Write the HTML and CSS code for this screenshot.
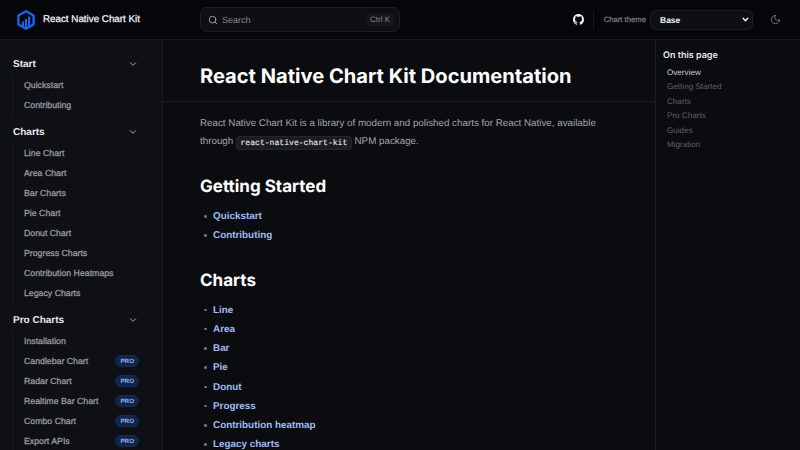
FILE: index.html
```html
<!DOCTYPE html>
<html lang="en">
<head>
    <meta charset="UTF-8">
    <meta name="viewport" content="width=device-width, initial-scale=1.0">
    <title>React Native Chart Kit Documentation</title>
    <link rel="stylesheet" href="styles.css">
</head>
<body>
    <header class="topbar">
        <div class="brand">
            <svg class="logo" viewBox="0 0 20 20" width="20" height="20">
                <path d="M10 1.300 17.600 5.500V14.500L10 18.700 2.400 14.500V5.500Z" fill="none" stroke="#1666ee" stroke-width="2.400" stroke-linejoin="round"/>
                <path d="M5.800 11.500h2.200v5.500H5.800zM8.900 9h2.200v9H8.900zM12 6.500h2.200v10.500H12z" fill="#1666ee"/>
            </svg>
            <span class="brand-name">React Native Chart Kit</span>
        </div>
        <div class="search">
            <svg viewBox="0 0 24 24" width="10" height="10" fill="none" stroke="#a5a7ad" stroke-width="2.200" stroke-linecap="round"><circle cx="11" cy="11" r="8"/><path d="m21 21-4.300-4.300"/></svg>
            <span class="search-label">Search</span>
            <span class="search-key">Ctrl K</span>
        </div>
        <div class="actions">
            <svg class="github" viewBox="0 0 16 16" width="11" height="11" fill="#f2f3f5"><path d="M8 0c4.420 0 8 3.580 8 8a8.013 8.013 0 0 1-5.450 7.590c-.4.080-.55-.170-.55-.380 0-.270.010-1.130.010-2.200 0-.750-.250-1.230-.540-1.480 1.780-.2 3.650-.880 3.650-3.950 0-.880-.310-1.590-.820-2.150.080-.2.360-1.020-.080-2.120 0 0-.670-.220-2.200.820-.640-.180-1.320-.270-2-.270-.680 0-1.360.090-2 .270-1.530-1.030-2.200-.820-2.200-.820-.440 1.100-.160 1.920-.080 2.120-.510.560-.820 1.280-.820 2.150 0 3.060 1.860 3.750 3.640 3.950-.230.2-.440.550-.510 1.070-.460.210-1.610.550-2.330-.660-.150-.240-.600-.830-1.230-.820-.670.010-.270.380.010.530.340.190.730.900.820 1.130.160.450.680 1.310 2.690.940 0 .670.010 1.300.010 1.490 0 .210-.150.450-.550.380A7.995 7.995 0 0 1 0 8c0-4.420 3.580-8 8-8Z"/></svg>
            <span class="divider"></span>
            <span class="theme-label">Chart theme</span>
            <div class="theme-select">
                <span>Base</span>
                <svg viewBox="0 0 12 12" width="7" height="7" fill="none" stroke="#f2f3f5" stroke-width="2.400" stroke-linecap="round" stroke-linejoin="round"><path d="m2 4 4 4 4-4"/></svg>
            </div>
            <svg class="moon" viewBox="0 0 24 24" width="11" height="11" fill="none" stroke="#7d7f86" stroke-width="2" stroke-linecap="round" stroke-linejoin="round"><path d="M12 3a6 6 0 0 0 9 9 9 9 0 1 1-9-9Z"/></svg>
        </div>
    </header>

    <div class="layout">
        <nav class="sidebar">
            <div class="group">
                <div class="group-title">Start <svg class="chevron" viewBox="0 0 12 12" width="8" height="8"><path d="m2 4 4 4 4-4"/></svg></div>
                <ul class="group-items">
                    <li>Quickstart</li>
                    <li>Contributing</li>
                </ul>
            </div>
            <div class="group">
                <div class="group-title">Charts <svg class="chevron" viewBox="0 0 12 12" width="8" height="8"><path d="m2 4 4 4 4-4"/></svg></div>
                <ul class="group-items">
                    <li>Line Chart</li>
                    <li>Area Chart</li>
                    <li>Bar Charts</li>
                    <li>Pie Chart</li>
                    <li>Donut Chart</li>
                    <li>Progress Charts</li>
                    <li>Contribution Heatmaps</li>
                    <li>Legacy Charts</li>
                </ul>
            </div>
            <div class="group">
                <div class="group-title">Pro Charts <svg class="chevron" viewBox="0 0 12 12" width="8" height="8"><path d="m2 4 4 4 4-4"/></svg></div>
                <ul class="group-items">
                    <li>Installation</li>
                    <li>Candlebar Chart <span class="badge">PRO</span></li>
                    <li>Radar Chart <span class="badge">PRO</span></li>
                    <li>Realtime Bar Chart <span class="badge">PRO</span></li>
                    <li>Combo Chart <span class="badge">PRO</span></li>
                    <li>Export APIs <span class="badge">PRO</span></li>
                </ul>
            </div>
        </nav>

        <main class="content">
            <h1>React Native Chart Kit Documentation</h1>
            <div class="article">
                <p>React Native Chart Kit is a library of modern and polished charts for React Native, available through <code>react-native-chart-kit</code> NPM package.</p>
                <h2>Getting Started</h2>
                <ul class="links">
                    <li><a href="#">Quickstart</a></li>
                    <li><a href="#">Contributing</a></li>
                </ul>
                <h2>Charts</h2>
                <ul class="links">
                    <li><a href="#">Line</a></li>
                    <li><a href="#">Area</a></li>
                    <li><a href="#">Bar</a></li>
                    <li><a href="#">Pie</a></li>
                    <li><a href="#">Donut</a></li>
                    <li><a href="#">Progress</a></li>
                    <li><a href="#">Contribution heatmap</a></li>
                    <li><a href="#">Legacy charts</a></li>
                </ul>
            </div>
        </main>

        <aside class="toc">
            <div class="toc-title">On this page</div>
            <ul>
                <li class="current">Overview</li>
                <li>Getting Started</li>
                <li>Charts</li>
                <li>Pro Charts</li>
                <li>Guides</li>
                <li>Migration</li>
            </ul>
        </aside>
    </div>
</body>
</html>
```

FILE: styles.css
```css
* {
    margin: 0;
    padding: 0;
    box-sizing: border-box;
}

html, body {
    height: 100%;
    overflow: hidden;
}

body {
    display: flex;
    flex-direction: column;
    background: #0b0c10;
    color: #a9abb0;
    font-family: "Liberation Sans", Arial, sans-serif;
    text-rendering: geometricPrecision;
}

ul {
    list-style: none;
}

.topbar {
    flex: none;
    display: flex;
    align-items: center;
    height: 40px;
    padding-left: 16px;
    background: #05060a;
    border-bottom: 1px solid #1a1b20;
}

.brand {
    display: flex;
    align-items: center;
    gap: 7px;
    width: 184px;
}

.brand-name {
    font-size: 9.800px;
    color: #f2f3f5;
    white-space: nowrap;
    -webkit-text-stroke: 0.25px #f2f3f5;
}

.search {
    display: flex;
    align-items: center;
    gap: 4px;
    width: 200px;
    height: 25px;
    padding: 0 5px 0 7px;
    background: #0e0f14;
    border: 1px solid #1d1e24;
    border-radius: 7px;
}

.search-label {
    flex: 1;
    font-size: 9px;
    color: #85878e;
}

.search-key {
    padding: 2px 4px;
    font-size: 8px;
    color: #85878e;
    background: #15161b;
    border-radius: 4px;
}

.actions {
    display: flex;
    align-items: center;
    margin-left: auto;
}

.divider {
    width: 1px;
    height: 20px;
    margin: 0 10px 0 9px;
    background: #17181d;
}

.theme-label {
    margin-right: 4px;
    margin-bottom: 1px;
    font-size: 7.700px;
    color: #75777e;
    -webkit-text-stroke: 0.25px #75777e;
}

.theme-select {
    display: flex;
    align-items: center;
    justify-content: space-between;
    width: 103px;
    height: 20px;
    padding: 0 3px 0 9px;
    font-size: 8.500px;
    font-weight: 700;
    color: #f2f3f5;
    background: #0e0f14;
    border: 1px solid #1d1e24;
    border-radius: 6px;
}

.moon {
    margin: 0 19px 0 17px;
}

.layout {
    flex: 1;
    display: flex;
    min-height: 0;
}

.sidebar {
    flex: none;
    width: 163px;
    padding: 14px 12px 0;
    background: #0f1016;
    border-right: 1px solid #1a1b20;
}

.group {
    margin-bottom: 7px;
}

.group-title {
    display: flex;
    align-items: center;
    justify-content: space-between;
    height: 20px;
    padding: 0 13px 0 1px;
    font-size: 10px;
    font-weight: 700;
    color: #e9eaed;
}

.chevron {
    fill: none;
    stroke: #a9abb0;
    stroke-width: 1.500;
    stroke-linecap: round;
    stroke-linejoin: round;
}

.group-items {
    margin-top: 1px;
    border-left: 1px solid #1c1d23;
}

.group-items li {
    display: flex;
    align-items: center;
    justify-content: space-between;
    height: 20px;
    padding: 0 11px;
    font-size: 8.750px;
    color: #96989e;
    -webkit-text-stroke: 0.3px #96989e;
}

.badge {
    padding: 1.500px 4px;
    font-size: 6.250px;
    line-height: 7px;
    font-weight: 700;
    color: #93b4e6;
    background: #11244a;
    border: 1px solid #152c58;
    border-radius: 8px;
    -webkit-text-stroke: 0;
}

.content {
    flex: none;
    width: 493px;
    border-right: 1px solid #1a1b20;
}

h1 {
    height: 62px;
    padding: 21px 37px 0;
    font-family: Inter, sans-serif;
    font-size: 20.100px;
    line-height: 30px;
    font-weight: 700;
    color: #fff;
    border-bottom: 1px solid #1a1b20;
    white-space: nowrap;
}

.article {
    padding: 12.500px 37px 0;
}

.article p {
    max-width: 400px;
    font-size: 9.800px;
    line-height: 18.800px;
    color: #a3a5aa;
}

code {
    padding: 1.500px 3.500px;
    font-family: "Liberation Mono", monospace;
    font-size: 8.100px;
    line-height: 10px;
    color: #e4e5e8;
    background: #1b1c21;
    border: 1px solid #25262c;
    border-radius: 4px;
    -webkit-text-stroke: 0.15px #e4e5e8;
}

h2 {
    margin-top: 23px;
    margin-bottom: 8px;
    font-family: Inter, sans-serif;
    font-size: 17px;
    line-height: 24px;
    font-weight: 700;
    color: #fff;
}

.links li {
    position: relative;
    height: 19.250px;
    padding-left: 13px;
    font-size: 9.900px;
    line-height: 19.250px;
    font-weight: 700;
}

.links li::before {
    content: "";
    position: absolute;
    left: 4px;
    top: 8px;
    width: 2.500px;
    height: 2.500px;
    background: #6f7178;
    border-radius: 50%;
}

.links a {
    color: #9fbcf0;
    text-decoration: none;
}

.toc {
    flex: 1;
    padding: 9px 7px;
}

.toc-title {
    margin-bottom: 3px;
    font-family: Inter, sans-serif;
    font-size: 9px;
    line-height: 14px;
    font-weight: 600;
    color: #e9eaed;
}

.toc li {
    height: 14.400px;
    padding-left: 4px;
    font-size: 8.125px;
    line-height: 14.400px;
    color: #5e6066;
}

.toc li.current {
    color: #c9cad0;
}
```
